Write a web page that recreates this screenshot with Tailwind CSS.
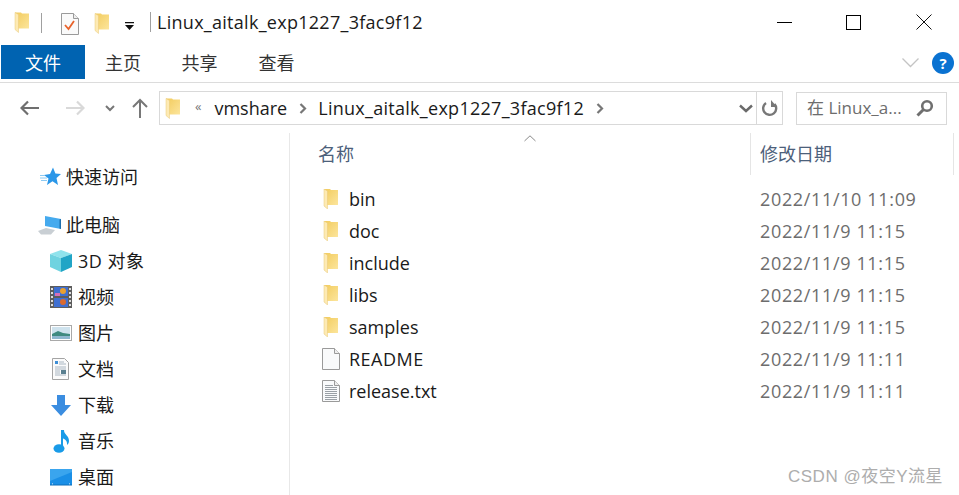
<!DOCTYPE html>
<html lang="zh-CN">
<head>
  <meta charset="UTF-8">
  <title>Linux_aitalk_exp1227_3fac9f12</title>
  <script src="https://cdn.jsdelivr.net/npm/@tailwindcss/browser@4"></script>
</head>
<body class="bg-white">
  <svg width="0" height="0" class="absolute">
    <defs>
      <linearGradient id="fold" x1="0" y1="0" x2="1" y2="1">
        <stop offset="0" stop-color="#f2cb5c"/>
        <stop offset="1" stop-color="#fce59c"/>
      </linearGradient>
      <symbol id="folder" viewBox="0 0 16 20">
        <path d="M1 0h6l1 1h7v15H4z" fill="url(#fold)"/>
        <path d="M1 0l3.500 2v18L1 17z" fill="#fdeab4"/>
        <path d="M1 0l3.500 2v18L1 17z" fill="none" stroke="#e8c877" stroke-width=".5"/>
      </symbol>
    </defs>
  </svg>

  <div class="relative w-[959px] h-[495px] overflow-hidden font-['Open_Sans','Noto_Sans_CJK_SC',sans-serif] text-[#1a1a1a]">
    <!-- title bar -->
    <header class="flex items-center h-[45px] pl-[14px]">
      <svg class="w-[16px] h-[21px] mt-[-1px]"><use href="#folder"/></svg>
      <div class="w-px h-[20px] bg-[#a0a0a0] ml-[11px] mt-[1px]"></div>
      <svg class="w-[18px] h-[22px] ml-[19px] mt-[2px]" viewBox="0 0 18 22">
        <path d="M.5.500h12l5 5v16H.5z" fill="#fafafa" stroke="#9a9a9a"/>
        <path d="M12.500.500v5h5" fill="#eee" stroke="#9a9a9a"/>
        <path d="M4 12l3.500 4L13 8" fill="none" stroke="#e8622a" stroke-width="1.800"/>
      </svg>
      <svg class="w-[16px] h-[21px] ml-[15px] mt-[2px]"><use href="#folder"/></svg>
      <svg class="w-[9px] h-[8px] ml-[15px] mt-[7px]" viewBox="0 0 9 8">
        <path d="M0 0h9v1.200H0zM0 3h9L4.500 8z" fill="#111"/>
      </svg>
      <div class="w-px h-[20px] bg-[#a0a0a0] ml-[16px] mt-[-1px]"></div>
      <div class="ml-[6px] text-[18px] leading-[24px] mt-[-2px] tracking-[0.28px]">Linux_aitalk_exp1227_3fac9f12</div>
      <div class="ml-auto flex items-center mr-[27px] mt-[-1px]">
        <div class="w-[15px] h-px bg-black"></div>
        <div class="w-[15px] h-[15px] border border-black ml-[54px]"></div>
        <svg class="w-[16px] h-[16px] ml-[55px]" viewBox="0 0 16 16"><path d="M.5.500l15 15M15.500.500l-15 15" stroke="#111" fill="none"/></svg>
      </div>
    </header>

    <!-- ribbon tabs -->
    <nav class="flex items-stretch h-[37px] border-b border-[#dcdcdc] box-content">
      <div class="ml-px w-[84px] h-[34px] pt-[2px] bg-[#0063b1] text-white text-[18px] flex items-center justify-center">文件</div>
      <div class="w-[76px] h-[34px] pt-[2px] text-[18px] text-[#333] flex items-center justify-center">主页</div>
      <div class="w-[77px] h-[34px] pt-[2px] text-[18px] text-[#333] flex items-center justify-center">共享</div>
      <div class="w-[77px] h-[34px] pt-[2px] text-[18px] text-[#333] flex items-center justify-center">查看</div>
      <div class="ml-auto flex items-center h-[36px] mr-[5px] gap-[13px]">
        <svg class="w-[17px] h-[10px]" viewBox="0 0 17 10"><path d="M.5.500l8 8 8-8" fill="none" stroke="#c4c4c4" stroke-width="1.300"/></svg>
        <div class="w-[22px] h-[22px] rounded-full bg-[#0a72d1] text-white text-[15px] font-bold flex items-center justify-center">?</div>
      </div>
    </nav>

    <!-- address bar -->
    <div class="flex items-center h-[42px] mt-[4px] pl-[20px]">
      <svg class="w-[20px] h-[16px]" viewBox="0 0 20 16"><path d="M1 8h18M8 1.500L1.500 8 8 14.500" fill="none" stroke="#6f6f6f" stroke-width="2.200"/></svg>
      <svg class="w-[20px] h-[16px] ml-[25px]" viewBox="0 0 20 16"><path d="M1 8h18M12 1.500L18.500 8 12 14.500" fill="none" stroke="#d9d9d9" stroke-width="2.200"/></svg>
      <svg class="w-[10px] h-[7px] ml-[20px]" viewBox="0 0 10 7"><path d="M1 1l4 4 4-4" fill="none" stroke="#777" stroke-width="2"/></svg>
      <svg class="w-[16px] h-[20px] ml-[17px]" viewBox="0 0 16 20"><path d="M8 20V2M1 9l7-7 7 7" fill="none" stroke="#777" stroke-width="2"/></svg>
      <div class="ml-[11px] w-[624px] h-[34px] border border-[#d9d9d9] flex items-center">
        <svg class="w-[16px] h-[21px] ml-[5px]"><use href="#folder"/></svg>
        <span class="ml-[14px] text-[13px] text-[#777] mt-[-2px]">«</span>
        <span class="ml-[13px] text-[18px]">vmshare</span>
        <svg class="w-[8px] h-[11px] ml-[12px]" viewBox="0 0 8 11"><path d="M1.500 1l4.500 4.500L1.500 10" fill="none" stroke="#777" stroke-width="2.200"/></svg>
        <span class="ml-[11px] text-[18px] tracking-[0.28px]">Linux_aitalk_exp1227_3fac9f12</span>
        <svg class="w-[8px] h-[11px] ml-[12px]" viewBox="0 0 8 11"><path d="M1.500 1l4.500 4.500L1.500 10" fill="none" stroke="#777" stroke-width="2.200"/></svg>
        <svg class="w-[14px] h-[9px] ml-auto mr-[3px]" viewBox="0 0 14 9"><path d="M1 1.500l6 5.500 6-5.500" fill="none" stroke="#6a6a6a" stroke-width="2.400"/></svg>
        <div class="w-[26px] h-full border-l border-[#d9d9d9] flex items-center justify-center">
          <svg class="w-[17px] h-[17px]" viewBox="0 0 17 17"><path d="M13.500 4A6.500 6.500 0 1 1 5 3" fill="none" stroke="#777" stroke-width="2.400"/><path d="M10 0v7h6z" fill="#777"/></svg>
        </div>
      </div>
      <div class="ml-[13px] w-[151px] h-[33px] border border-[#d9d9d9] flex items-center pl-[10px] text-[17px] text-[#6d6d6d]">
        <span class="whitespace-nowrap">在 Linux_a...</span>
        <svg class="w-[18px] h-[18px] ml-auto mr-[12px]" viewBox="0 0 18 18"><circle cx="11" cy="7" r="4.800" fill="none" stroke="#6f6f6f" stroke-width="2.600"/><path d="M7.500 10.500L1.500 16.500" stroke="#6f6f6f" stroke-width="3"/></svg>
      </div>
    </div>

    <!-- body -->
    <div class="flex h-[362px] mt-[4px]">
      <!-- nav pane -->
      <aside class="w-[290px] h-full border-r border-[#e8e8e8] text-[18px] shrink-0 pt-[26px]">
        <div class="flex items-center h-[36px] pl-[40px]">
          <svg class="w-[21px] h-[20px]" viewBox="0 0 21 20"><path d="M13 .5l2.400 6.100 5.600.4-4.500 4 1.500 7-5.500-3.700L7 18l1.500-6.500L4 8l6-1z" fill="#2b97e8"/><path d="M0 8.500h5M0 11h7M1 13.500h6" stroke="#8ccaf3"/></svg>
          <span class="ml-[5px]">快速访问</span>
        </div>
        <div class="flex items-center h-[36px] pl-[38px] mt-[12px]">
          <svg class="w-[24px] h-[20px]" viewBox="0 0 24 20"><path d="M7 1l16 3v10L7 11z" fill="#45aaee"/><path d="M23 4l-1.500.5v9L23 14z" fill="#1d6fae"/><path d="M0 16l8-3 9 2-4 4.500H3z" fill="#c9cfd4"/></svg>
          <span class="ml-[4px]">此电脑</span>
        </div>
        <div class="flex items-center h-[36px] pl-[50px]">
          <svg class="w-[22px] h-[22px]" viewBox="0 0 22 22"><path d="M0 4l11 4 11-4-11-4z" fill="#8fe3ec"/><path d="M0 4l11 4v14L0 17z" fill="#6fd3e0"/><path d="M22 4L11 8v14l11-5z" fill="#21a5c6"/></svg>
          <span class="ml-[6px] tracking-[0.5px]">3D 对象</span>
        </div>
        <div class="flex items-center h-[36px] pl-[50px]">
          <svg class="w-[22px] h-[22px]" viewBox="0 0 22 22"><rect width="22" height="22" fill="#5d5d5d"/><rect x="4" y="1" width="14" height="9" fill="#3f6fd0"/><rect x="4" y="12" width="14" height="9" fill="#3f6fd0"/><circle cx="13" cy="5" r="3" fill="#e8a030"/><circle cx="13" cy="16" r="3" fill="#d96a30"/><rect x="5" y="7" width="5" height="3" fill="#d76fb8"/><path d="M1 2h2v2H1zM1 6h2v2H1zM1 10h2v2H1zM1 14h2v2H1zM1 18h2v2H1zM19 2h2v2h-2zM19 6h2v2h-2zM19 10h2v2h-2zM19 14h2v2h-2zM19 18h2v2h-2z" fill="#ddd"/></svg>
          <span class="ml-[6px]">视频</span>
        </div>
        <div class="flex items-center h-[36px] pl-[50px]">
          <svg class="w-[22px] h-[17px]" viewBox="0 0 22 17"><rect x=".5" y=".5" width="21" height="15" fill="#fff" stroke="#a9a9a9"/><rect x="2" y="2" width="18" height="12" fill="#cfe3ee"/><path d="M2 9l6-3 5 2 7 1v5H2z" fill="#3f8a80"/><path d="M2 11h18v3H2z" fill="#8eb7cf"/></svg>
          <span class="ml-[6px]">图片</span>
        </div>
        <div class="flex items-center h-[36px] pl-[52px]">
          <svg class="w-[17px] h-[22px]" viewBox="0 0 17 22"><path d="M.5.500h12l4 4v17H.5z" fill="#fbfbfb" stroke="#a4a4a4"/><path d="M3 3h3v3H3z" fill="#3c8ed6"/><path d="M7 4h5M7 6h7M3 9h11M3 11h11M3 13h5M3 15h5M3 17h11" stroke="#a9b6c2"/><rect x="9" y="12" width="5" height="4" fill="#5a8090"/></svg>
          <span class="ml-[9px]">文档</span>
        </div>
        <div class="flex items-center h-[36px] pl-[51px]">
          <svg class="w-[20px] h-[21px]" viewBox="0 0 20 21"><path d="M6 0h8v10h6L10 21 0 10h6z" fill="#3b8de0"/></svg>
          <span class="ml-[7px]">下载</span>
        </div>
        <div class="flex items-center h-[36px] pl-[53px]">
          <svg class="w-[17px] h-[23px]" viewBox="0 0 17 23"><ellipse cx="6" cy="18.500" rx="5.500" ry="4.300" fill="#199be8"/><path d="M8 0h3c0 5 5 5 5 11 0 2-1 3-2 4 .5-4-2-6-4-6.500V18H8z" fill="#199be8"/></svg>
          <span class="ml-[8px]">音乐</span>
        </div>
        <div class="flex items-center h-[36px] pl-[50px]">
          <svg class="w-[22px] h-[17px]" viewBox="0 0 22 17"><rect width="22" height="16" fill="#1a8fe6"/><path d="M0 0h22v3L0 12z" fill="#3aa5ee"/><path d="M2 15h18" stroke="#fff" stroke-dasharray="1 16 1"/><path d="M0 16h22" stroke="#0d6db8"/></svg>
          <span class="ml-[6px]">桌面</span>
        </div>
      </aside>

      <!-- file list -->
      <main class="flex-1 min-w-0">
        <div class="relative flex h-[42px] text-[18px] text-[#4c607a]">
          <div class="pl-[28px] w-[461px] h-[42px] flex items-center border-r border-[#e5e5e5]">名称</div>
          <div class="pl-[9px] w-[203px] h-[42px] flex items-center border-r border-[#e5e5e5]">修改日期</div>
          <svg class="absolute left-[234px] top-[2px] w-[12px] h-[7px]" viewBox="0 0 12 7"><path d="M.5 6L6 .8 11.500 6" fill="none" stroke="#8a8a8a"/></svg>
        </div>
        <ul class="pt-[8px] text-[18px]">
          <li class="flex items-center h-[32px]">
            <svg class="w-[16px] h-[20px] ml-[33px]"><use href="#folder"/></svg>
            <span class="ml-[10px] w-[411px]">bin</span>
            <span class="text-[#6d6d6d] tracking-[0.65px]">2022/11/10 11:09</span>
          </li>
          <li class="flex items-center h-[32px]">
            <svg class="w-[16px] h-[20px] ml-[33px]"><use href="#folder"/></svg>
            <span class="ml-[10px] w-[411px]">doc</span>
            <span class="text-[#6d6d6d] tracking-[0.65px]">2022/11/9 11:15</span>
          </li>
          <li class="flex items-center h-[32px]">
            <svg class="w-[16px] h-[20px] ml-[33px]"><use href="#folder"/></svg>
            <span class="ml-[10px] w-[411px]">include</span>
            <span class="text-[#6d6d6d] tracking-[0.65px]">2022/11/9 11:15</span>
          </li>
          <li class="flex items-center h-[32px]">
            <svg class="w-[16px] h-[20px] ml-[33px]"><use href="#folder"/></svg>
            <span class="ml-[10px] w-[411px]">libs</span>
            <span class="text-[#6d6d6d] tracking-[0.65px]">2022/11/9 11:15</span>
          </li>
          <li class="flex items-center h-[32px]">
            <svg class="w-[16px] h-[20px] ml-[33px]"><use href="#folder"/></svg>
            <span class="ml-[10px] w-[411px]">samples</span>
            <span class="text-[#6d6d6d] tracking-[0.65px]">2022/11/9 11:15</span>
          </li>
          <li class="flex items-center h-[32px]">
            <svg class="w-[18px] h-[22px] ml-[32px]" viewBox="0 0 18 22"><path d="M.5.500h12l5 5v16H.5z" fill="#f9fafb" stroke="#9a9a9a"/><path d="M12.500.500v5h5" fill="#eee" stroke="#9a9a9a"/></svg>
            <span class="ml-[9px] w-[411px] tracking-[0.5px]">README</span>
            <span class="text-[#6d6d6d] tracking-[0.65px]">2022/11/9 11:11</span>
          </li>
          <li class="flex items-center h-[32px]">
            <svg class="w-[18px] h-[22px] ml-[32px]" viewBox="0 0 18 22"><path d="M.5.500h12l5 5v16H.5z" fill="#f9fafb" stroke="#9a9a9a"/><path d="M12.500.500v5h5" fill="#eee" stroke="#9a9a9a"/><path d="M3 5.500h8M3 7.500h12M3 9.500h12M3 11.500h12M3 13.500h12M3 15.500h12M3 17.500h12M3 19.500h12" stroke="#9aa0a6"/></svg>
            <span class="ml-[9px] w-[411px]">release.txt</span>
            <span class="text-[#6d6d6d] tracking-[0.65px]">2022/11/9 11:11</span>
          </li>
        </ul>
      </main>
    </div>

    <!-- watermark over the page -->
    <div class="absolute right-[16px] top-[467px] text-[17px] tracking-[0.5px] leading-[20px] text-[#adadad] font-['Liberation_Sans','Noto_Sans_CJK_SC',sans-serif]">CSDN @夜空Y流星</div>
  </div>
</body>
</html>
